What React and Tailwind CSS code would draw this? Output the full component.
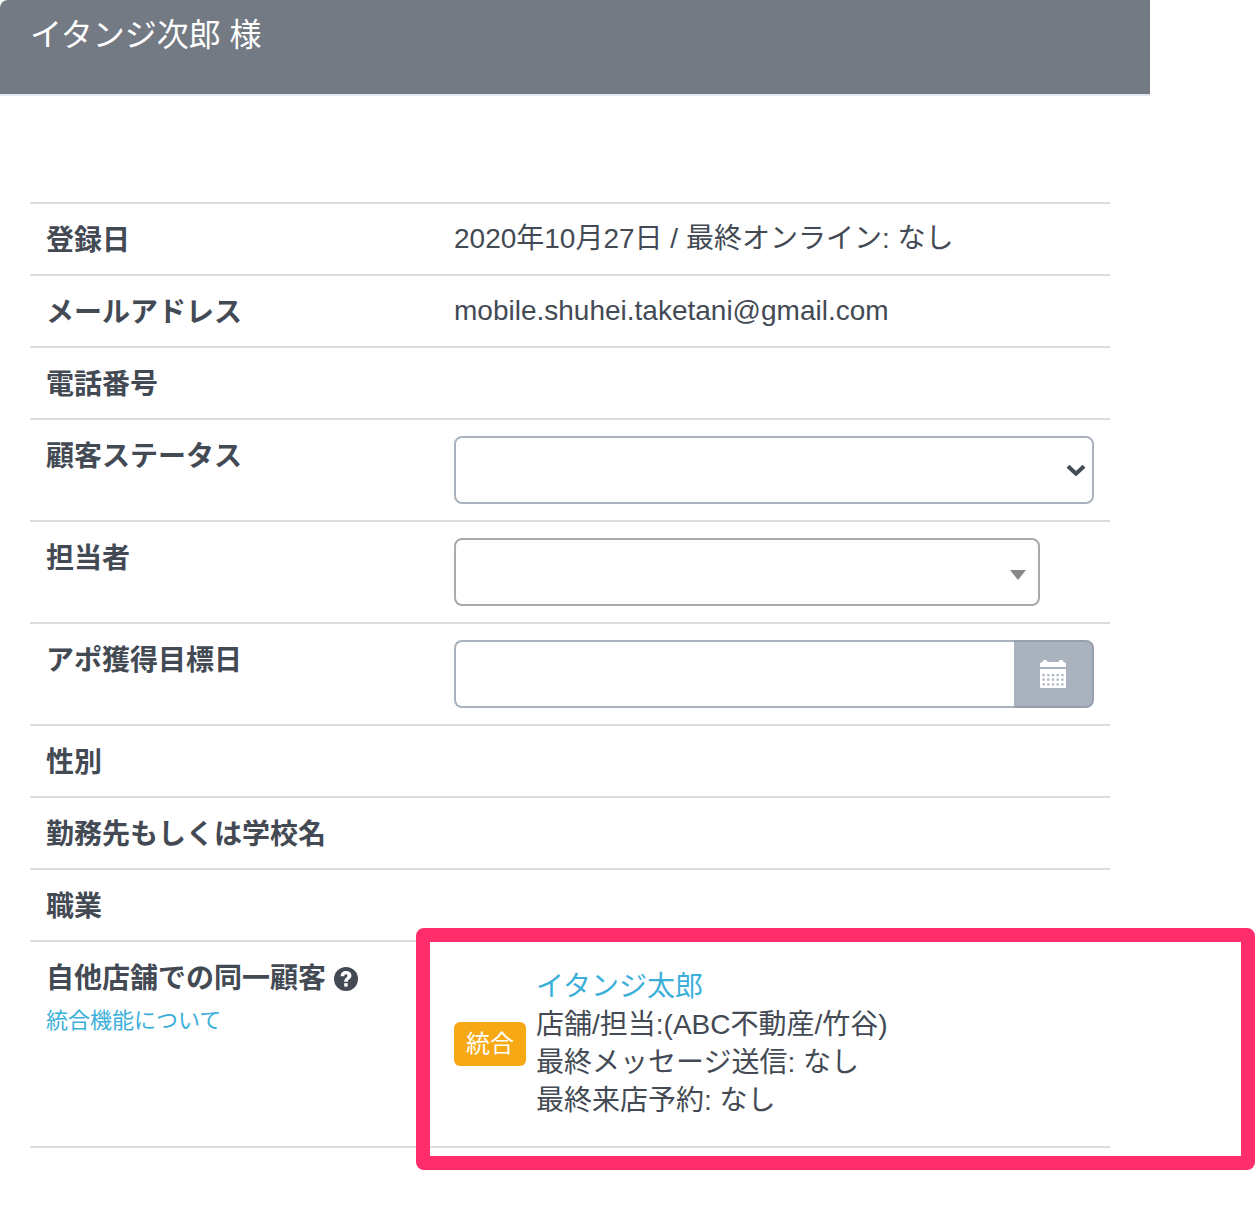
import React, { useState } from 'react';

const QuestionIcon = () => (
  <svg viewBox="0 0 24 24" className="inline-block w-6 h-6" aria-hidden="true">
    <circle cx="12" cy="12" r="12" fill="currentColor" />
    <path d="M6.600 9.200C6.800 5.600 9 4 12.100 4c3 0 5.300 1.700 5.300 4.500 0 3.600-3.700 3.900-3.700 6.300h-3.500c0-3.700 3.200-4.200 3.200-6.100 0-1-.6-1.500-1.500-1.500-1.100 0-1.600.8-1.700 2z" fill="#fff" />
    <rect x="10.200" y="16.200" width="3.500" height="3.400" fill="#fff" />
  </svg>
);

const CalendarIcon = () => (
  <svg viewBox="0 0 26 28" className="w-[26px] h-7" fill="currentColor" aria-hidden="true">
    <path d="M0 7V3.500L1.500 2H2.500L3.500 0h3L7.500 2h11l1-2h3l1 2h1L26 3.500V7z" />
    <path
      fillRule="evenodd"
      d="M0 9h26v18a1 1 0 0 1-1 1H1a1 1 0 0 1-1-1zM2.500 14v2.200h2.200v-2.200zM7.200 14v2.200h2.200v-2.200zM11.900 14v2.200h2.200v-2.200zM16.600 14v2.200h2.200v-2.200zM21.300 14v2.200h2.200v-2.200zM2.500 18.600v2.200h2.200v-2.200zM7.200 18.600v2.200h2.200v-2.200zM11.900 18.600v2.200h2.200v-2.200zM16.600 18.600v2.200h2.200v-2.200zM21.300 18.600v2.200h2.200v-2.200zM2.500 23.200v2.200h2.200v-2.200zM7.200 23.200v2.200h2.200v-2.200zM11.900 23.200v2.200h2.200v-2.200zM16.600 23.200v2.200h2.200v-2.200zM21.300 23.200v2.200h2.200v-2.200z"
    />
  </svg>
);

const Row = ({ label, htmlFor, children }) => (
  <tr className="border-y-2 border-[#dddddd]">
    <th scope="row" className="w-[408px] px-4 pt-[18px] pb-3.5 text-left align-top font-bold">
      {htmlFor ? <label htmlFor={htmlFor} className="block">{label}</label> : label}
    </th>
    <td className="p-4 align-top">{children}</td>
  </tr>
);

export default function App() {
  const [status, setStatus] = useState('');
  const [staff, setStaff] = useState('');
  const [date, setDate] = useState('');

  return (
    <div className="min-h-screen bg-white pr-[106px] text-[28px] leading-[38px] text-[#434a54] font-['Liberation_Sans','Noto_Sans_CJK_JP',sans-serif]">
      <header className="rounded-tl-lg border-b-2 border-[#e5e8ed] bg-[#737a84] px-[30px] pt-3 pb-9">
        <h1 className="text-[32px] leading-[46px] text-white">イタンジ次郎 様</h1>
      </header>

      <main className="pt-[106px] pl-[30px] pr-10">
        <table className="w-full table-fixed border-collapse">
          <tbody>
            <Row label="登録日">2020年10月27日 / 最終オンライン: なし</Row>
            <Row label="メールアドレス">mobile.shuhei.taketani@gmail.com</Row>
            <Row label="電話番号" />
            <Row label="顧客ステータス" htmlFor="status">
              <div className="relative">
                <select
                  id="status"
                  value={status}
                  onChange={(e) => setStatus(e.target.value)}
                  className="block h-[68px] w-full appearance-none rounded-lg border-2 border-[#aab2bd] bg-white px-6"
                >
                  <option value=""></option>
                </select>
                <svg viewBox="0 0 20 12" className="pointer-events-none absolute right-2 top-7 h-3 w-5" aria-hidden="true">
                  <path d="M2 2.200l8 7.500 8-7.500" fill="none" stroke="#434a54" strokeWidth="4" />
                </svg>
              </div>
            </Row>
            <Row label="担当者" htmlFor="staff">
              <div className="relative mr-[54px]">
                <select
                  id="staff"
                  value={staff}
                  onChange={(e) => setStaff(e.target.value)}
                  className="block h-[68px] w-full appearance-none rounded-lg border-2 border-[#aaaaaa] bg-white px-4"
                >
                  <option value=""></option>
                </select>
                <svg viewBox="0 0 16 10" className="pointer-events-none absolute right-3.5 top-8 h-2.5 w-4" aria-hidden="true">
                  <path d="M0 0h16L8 10z" fill="#888888" />
                </svg>
              </div>
            </Row>
            <Row label="アポ獲得目標日" htmlFor="date">
              <div className="flex h-[68px]">
                <input
                  id="date"
                  type="text"
                  value={date}
                  onChange={(e) => setDate(e.target.value)}
                  className="min-w-0 flex-1 rounded-l-lg border-2 border-r-0 border-[#aab2bd] bg-white px-6"
                />
                <button
                  type="button"
                  aria-label="カレンダー"
                  className="flex w-20 items-center justify-center rounded-r-lg border-2 border-l-0 border-[#96a0ad] bg-[#aab2bd] text-white"
                >
                  <CalendarIcon />
                </button>
              </div>
            </Row>
            <Row label="性別" />
            <Row label="勤務先もしくは学校名" />
            <Row label="職業" />
            <Row
              label={
                <>
                  <div className="flex items-center gap-2">
                    自他店舗での同一顧客 <QuestionIcon />
                  </div>
                  <a href="#merge" className="mt-1 block text-[22px] font-normal text-[#3bafda]">統合機能について</a>
                </>
              }
            >
              <div className="relative flex items-center gap-2.5 py-2.5">
                <button type="button" className="h-11 rounded-md bg-[#f6a815] px-3 text-2xl leading-[44px] text-white">統合</button>
                <div>
                  <a href="#customer" className="text-[#3bafda]">イタンジ太郎</a>
                  <p>店舗/担当:(ABC不動産/竹谷)</p>
                  <p>最終メッセージ送信: なし</p>
                  <p>最終来店予約: なし</p>
                </div>
                <div className="pointer-events-none absolute -top-[30px] -bottom-10 -left-[38px] -right-[161px] rounded-lg border-[14px] border-[#ff2d6b]" />
              </div>
            </Row>
          </tbody>
        </table>
      </main>
    </div>
  );
}
